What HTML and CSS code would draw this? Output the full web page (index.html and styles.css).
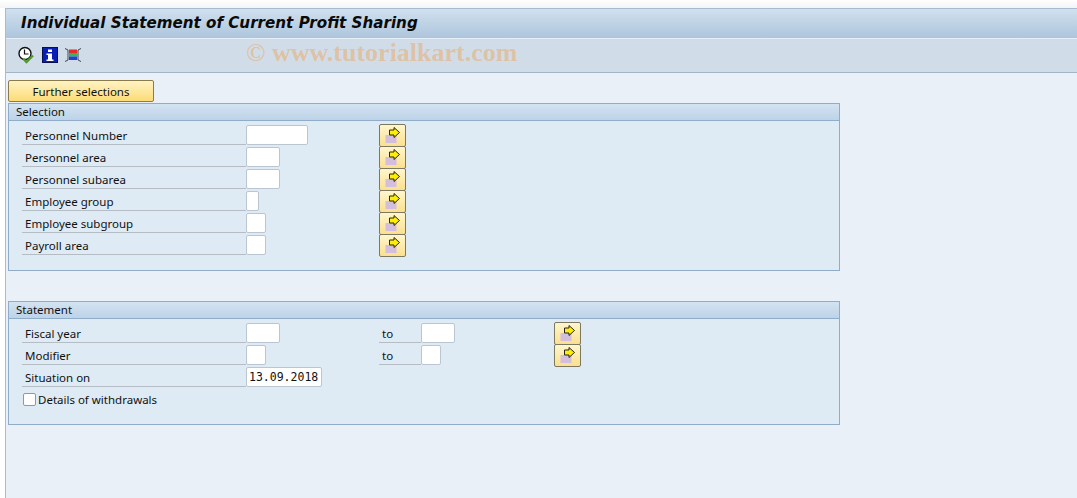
FILE: index.html
```html
<!DOCTYPE html>
<html lang="en">
<head>
<meta charset="utf-8">
<title>Individual Statement of Current Profit Sharing</title>
<link rel="stylesheet" href="styles.css">
</head>
<body>
<div class="topstrip"></div>
<div class="app">
  <header class="titlebar"><h1>Individual Statement of Current Profit Sharing</h1></header>
  <div class="toolbar">
    <svg class="tool" width="18" height="18" viewBox="0 0 18 18"><circle cx="8" cy="7.500" r="6" fill="#fff" stroke="#111" stroke-width="1.4"/><path d="M7.500 3.500v4.500h4" fill="none" stroke="#111" stroke-width="1.200"/><path d="M6.500 13l3 3 6.500-6.500" fill="none" stroke="#4f9a2a" stroke-width="2.400"/></svg>
    <svg class="tool" width="16" height="16" viewBox="0 0 16 16"><rect x="0.500" y="0.500" width="15" height="15" fill="#0a1fb4" stroke="#04104f"/><rect x="6" y="2.500" width="4" height="2.500" fill="#fff"/><path d="M4.500 6.500h5.500v6H11.500v1.500H4.500v-1.500H6V8H4.500z" fill="#fff"/></svg>
    <svg class="tool" width="16" height="16" viewBox="0 0 16 16"><path d="M0 1.500l3 1.500v10l-3 1.500M16 1.500l-3 1.500v10l3 1.500" fill="none" stroke="#222" stroke-width="0.800"/><rect x="4" y="2.500" width="8" height="3.500" fill="#e62a2a"/><rect x="4" y="6" width="8" height="3.500" fill="#35b553"/><rect x="4" y="9.500" width="8" height="3.500" fill="#1f3fe0"/></svg>
    <span class="watermark">© www.tutorialkart.com</span>
  </div>
  <main class="content">
    <button class="further" type="button">Further selections</button>
    <section class="panel panel-selection">
      <h2>Selection</h2>
      <div class="rows">
        <div class="row"><span class="label">Personnel Number</span><span class="slot"><input class="field w62" type="text"></span><button class="arrow" type="button"><svg width="17" height="17" viewBox="0 0 17 17"><rect x="1.500" y="8" width="11" height="8" fill="#d3bedd"/><path d="M5.500 3h4.500v-2.500l5.500 5-5.500 5v-2.500h-4.500z" fill="#ffee00" stroke="#222"/></svg></button></div>
        <div class="row"><span class="label">Personnel area</span><span class="slot"><input class="field w34" type="text"></span><button class="arrow" type="button"><svg width="17" height="17" viewBox="0 0 17 17"><rect x="1.500" y="8" width="11" height="8" fill="#d3bedd"/><path d="M5.500 3h4.500v-2.500l5.500 5-5.500 5v-2.500h-4.500z" fill="#ffee00" stroke="#222"/></svg></button></div>
        <div class="row"><span class="label">Personnel subarea</span><span class="slot"><input class="field w34" type="text"></span><button class="arrow" type="button"><svg width="17" height="17" viewBox="0 0 17 17"><rect x="1.500" y="8" width="11" height="8" fill="#d3bedd"/><path d="M5.500 3h4.500v-2.500l5.500 5-5.500 5v-2.500h-4.500z" fill="#ffee00" stroke="#222"/></svg></button></div>
        <div class="row"><span class="label">Employee group</span><span class="slot"><input class="field w13" type="text"></span><button class="arrow" type="button"><svg width="17" height="17" viewBox="0 0 17 17"><rect x="1.500" y="8" width="11" height="8" fill="#d3bedd"/><path d="M5.500 3h4.500v-2.500l5.500 5-5.500 5v-2.500h-4.500z" fill="#ffee00" stroke="#222"/></svg></button></div>
        <div class="row"><span class="label">Employee subgroup</span><span class="slot"><input class="field w20" type="text"></span><button class="arrow" type="button"><svg width="17" height="17" viewBox="0 0 17 17"><rect x="1.500" y="8" width="11" height="8" fill="#d3bedd"/><path d="M5.500 3h4.500v-2.500l5.500 5-5.500 5v-2.500h-4.500z" fill="#ffee00" stroke="#222"/></svg></button></div>
        <div class="row"><span class="label">Payroll area</span><span class="slot"><input class="field w20" type="text"></span><button class="arrow" type="button"><svg width="17" height="17" viewBox="0 0 17 17"><rect x="1.500" y="8" width="11" height="8" fill="#d3bedd"/><path d="M5.500 3h4.500v-2.500l5.500 5-5.500 5v-2.500h-4.500z" fill="#ffee00" stroke="#222"/></svg></button></div>
      </div>
    </section>
    <section class="panel panel-statement">
      <h2>Statement</h2>
      <div class="rows">
        <div class="row"><span class="label">Fiscal year</span><span class="slot"><input class="field w34" type="text"></span><span class="to">to</span><span class="slot"><input class="field w34" type="text"></span><button class="arrow" type="button"><svg width="17" height="17" viewBox="0 0 17 17"><rect x="1.500" y="8" width="11" height="8" fill="#d3bedd"/><path d="M5.500 3h4.500v-2.500l5.500 5-5.500 5v-2.500h-4.500z" fill="#ffee00" stroke="#222"/></svg></button></div>
        <div class="row"><span class="label">Modifier</span><span class="slot"><input class="field w20" type="text"></span><span class="to">to</span><span class="slot"><input class="field w20" type="text"></span><button class="arrow" type="button"><svg width="17" height="17" viewBox="0 0 17 17"><rect x="1.500" y="8" width="11" height="8" fill="#d3bedd"/><path d="M5.500 3h4.500v-2.500l5.500 5-5.500 5v-2.500h-4.500z" fill="#ffee00" stroke="#222"/></svg></button></div>
        <div class="row"><span class="label">Situation on</span><span class="slot"><input class="field w76 date" type="text" value="13.09.2018"></span></div>
        <label class="check"><input type="checkbox"><span>Details of withdrawals</span></label>
      </div>
    </section>
  </main>
</div>
</body>
</html>
```
FILE: styles.css
```css
* { box-sizing: border-box; }
html, body { margin: 0; padding: 0; height: 100%; overflow: hidden; }
body { background: #fff; font-family: "Noto Sans", sans-serif; font-size: 11.500px; color: #111; width: 1077px; height: 498px; }
.topstrip { height: 8px; background: linear-gradient(#ffffff, #f2f4f7); }
.app { height: 490px; margin-left: 5px; border-left: 1px solid #a9bccf; border-top: 1px solid #a9bccf; background: #e9f0f7; }
.titlebar { height: 30px; background: linear-gradient(#d0e0ee, #adc5dc); border-bottom: 1px solid #e6eff7; display: flex; align-items: center; padding: 0 0 2px 15px; }
.titlebar h1 { margin: 0; font-family: "DejaVu Sans", sans-serif; font-size: 15.150px; font-weight: bold; font-style: italic; color: #0a0a0a; white-space: nowrap; }
.toolbar { position: relative; height: 34px; background: #d0dde8; border-bottom: 1px solid #a3b4c8; display: flex; align-items: center; gap: 7px; padding-left: 11px; padding-bottom: 2px; }
.tool { display: block; flex: none; }
.watermark { position: absolute; left: 240px; top: 0; font-family: "Liberation Serif", serif; font-weight: bold; font-size: 26px; line-height: 27px; color: rgba(240, 160, 80, 0.45); white-space: nowrap; }
.content { padding: 7px 0 0 2px; }
.further { display: block; width: 146px; height: 22px; margin: 0 0 1px 0; padding: 0; background: linear-gradient(#fff3c4, #fcdc78); border: 1px solid #8b7a4a; border-radius: 2px; font: 11.500px "Noto Sans", sans-serif; color: #111; }
.panel { width: 832px; border: 1px solid #8facc8; background: #deeaf4; }
.panel h2 { margin: 0; height: 17px; padding-left: 7px; background: linear-gradient(#d3e3f1, #bdd3e7); border-bottom: 1px solid #8facc8; font-size: 11.500px; line-height: 15px; font-weight: normal; color: #111; }
.panel-selection { height: 168px; }
.panel-statement { height: 124px; margin-top: 30px; }
.rows { padding: 4px 0 0 13px; }
.row { display: flex; height: 22px; align-items: flex-start; }
.label { flex: none; width: 224px; height: 20px; padding: 3px 0 0 3px; border-bottom: 1px solid #b5bcc3; line-height: 16px; }
.slot { flex: none; width: 133px; }
.field { display: block; height: 20px; padding: 0 2px; background: #fff; border: 1px solid #bcc6d0; border-radius: 2px; outline: none; }
.w62 { width: 62px; } .w34 { width: 34px; } .w13 { width: 13px; } .w20 { width: 20px; } .w76 { width: 76px; }
.date { font-family: "DejaVu Sans Mono", monospace; font-size: 11.500px; color: #111; }
.arrow { flex: none; width: 27px; height: 23px; padding: 0 1px 0 0; margin-top: -1px; background: linear-gradient(#fff6cf, #fbe08c); border: 1px solid #7d7860; border-radius: 2px; display: flex; align-items: center; justify-content: center; }
.to { flex: none; width: 42px; height: 20px; padding: 3px 0 0 3px; border-bottom: 1px solid #b5bcc3; line-height: 16px; }
.check { display: flex; align-items: center; height: 20px; }
.check input { appearance: none; width: 13px; height: 13px; margin: 0 2px 0 1px; background: #fff; border: 1px solid #8d99a5; border-radius: 2px; }
```
